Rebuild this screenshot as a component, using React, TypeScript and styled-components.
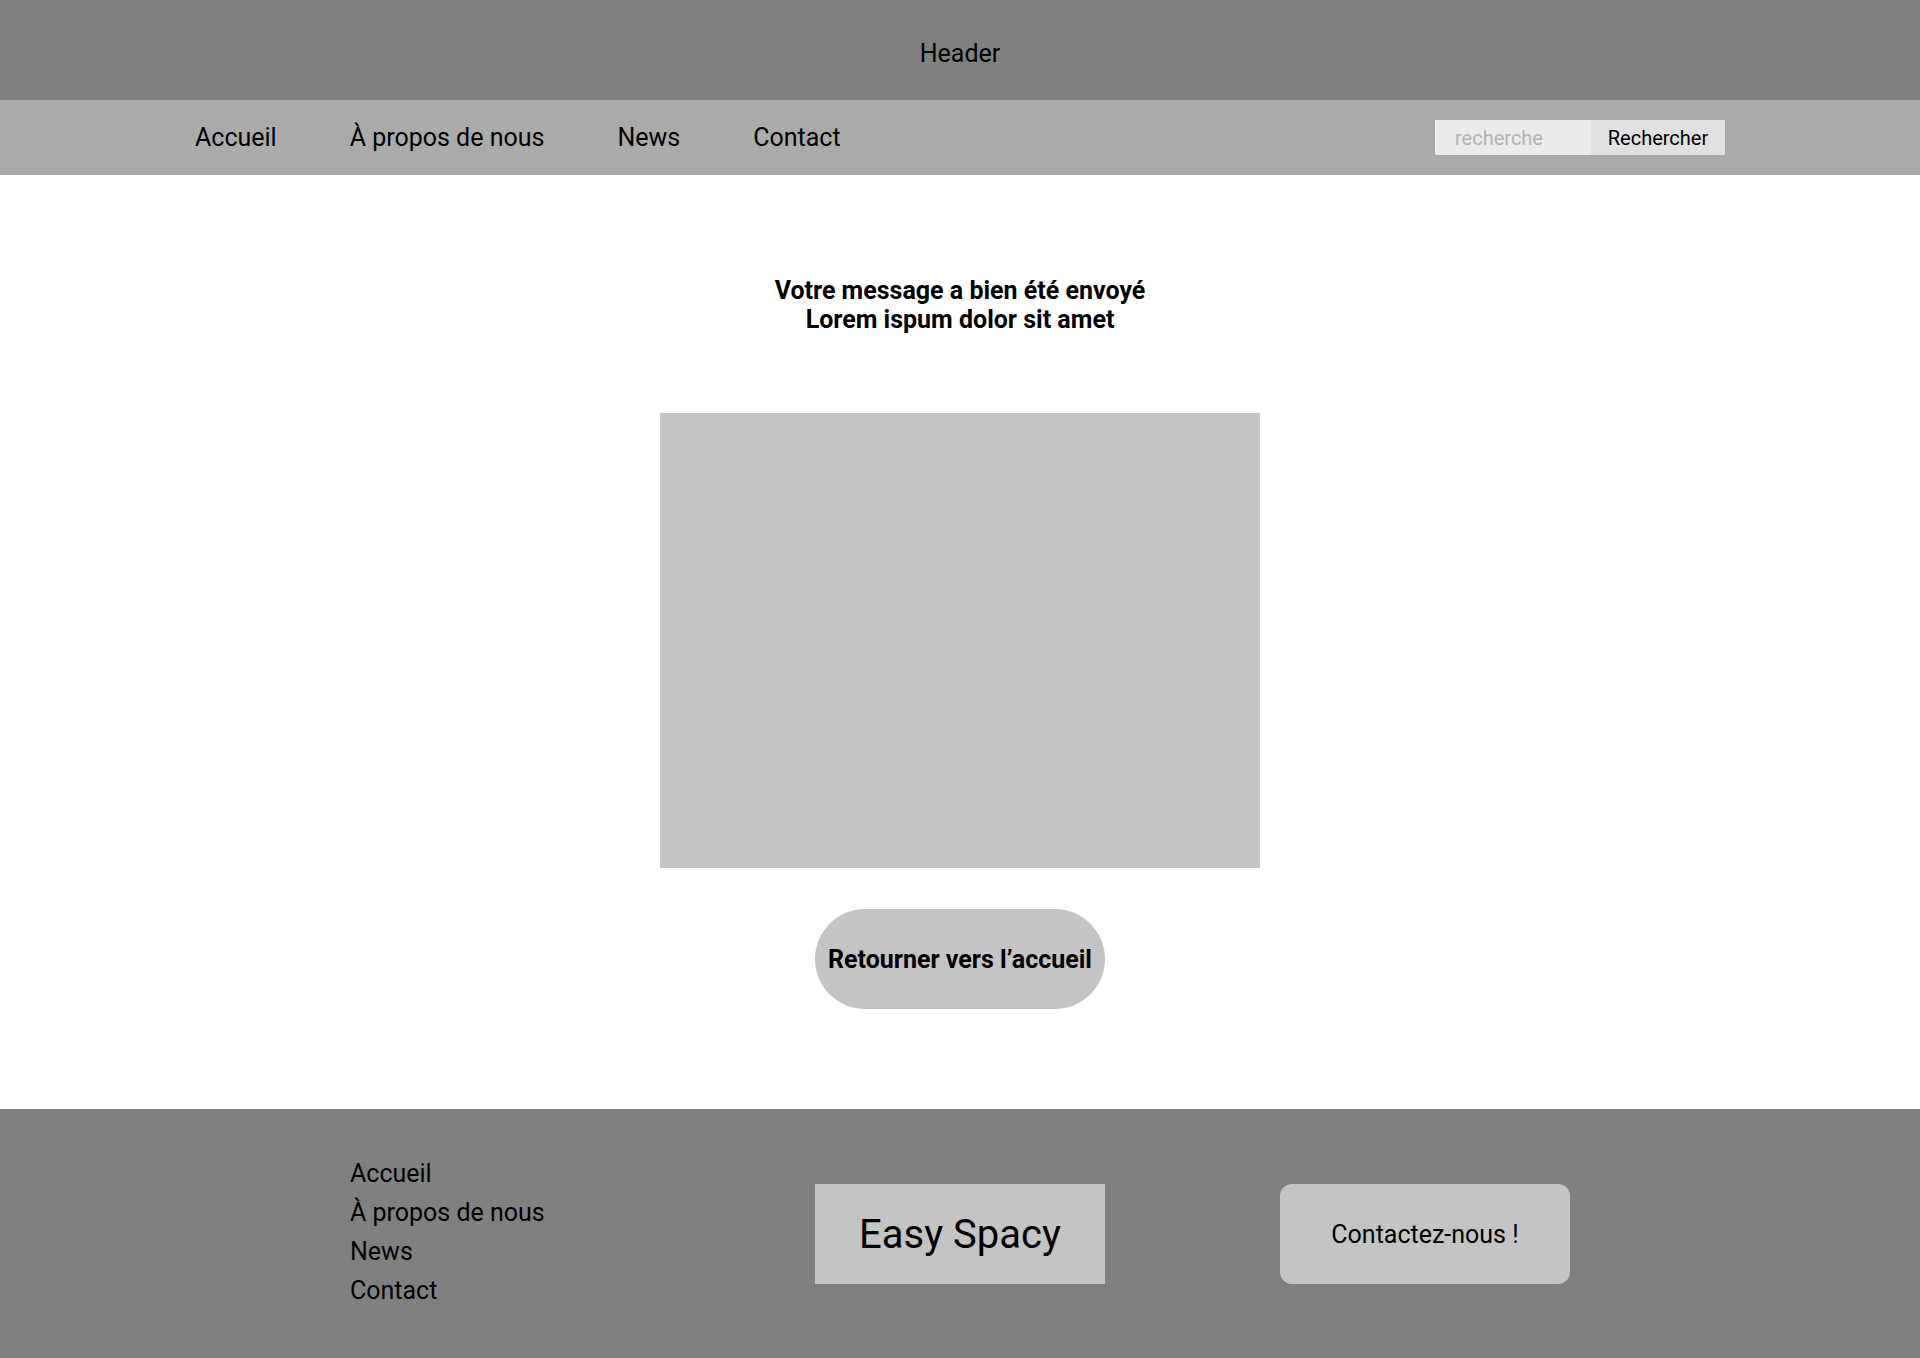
import styled, { createGlobalStyle } from 'styled-components';

const GlobalStyle = createGlobalStyle`
  * {
    box-sizing: border-box;
  }
  body {
    margin: 0;
    font-family: Roboto, 'Liberation Sans', sans-serif;
    color: #000;
    background: #fff;
  }
`;

const navLinks = ['Accueil', 'À propos de nous', 'News', 'Contact'];

const App = () => {
  return (
    <>
      <GlobalStyle />
      <Page>
        <TopHeader>Header</TopHeader>
        <NavBar>
          <NavList>
            {navLinks.map((link) => (
              <NavLink key={link} href="#">
                {link}
              </NavLink>
            ))}
          </NavList>
          <SearchForm onSubmit={(e) => e.preventDefault()}>
            <SearchInput placeholder="recherche" />
            <SearchButton type="submit">Rechercher</SearchButton>
          </SearchForm>
        </NavBar>
        <Main>
          <Title>
            Votre message a bien été envoyé
            <br />
            Lorem ispum dolor sit amet
          </Title>
          <ImagePlaceholder />
          <BackButton href="#">Retourner vers l’accueil</BackButton>
        </Main>
        <Footer>
          <FooterInner>
            <FooterLinks>
              {navLinks.map((link) => (
                <FooterLink key={link} href="#">
                  {link}
                </FooterLink>
              ))}
            </FooterLinks>
            <Logo>Easy Spacy</Logo>
            <ContactButton href="#">Contactez-nous !</ContactButton>
          </FooterInner>
        </Footer>
      </Page>
    </>
  );
};

const Page = styled.div`
  display: flex;
  flex-direction: column;
  min-height: 100vh;
`;

const TopHeader = styled.header`
  height: 100px;
  background-color: #808080;
  display: flex;
  align-items: center;
  justify-content: center;
  font-size: 25px;
  padding-top: 6px;
`;

const NavBar = styled.nav`
  height: 75px;
  background-color: #aaaaaa;
  display: flex;
  align-items: center;
  justify-content: space-between;
  padding: 0 195px;
`;

const NavList = styled.div`
  display: flex;
  gap: 73px;
`;

const NavLink = styled.a`
  color: #000;
  text-decoration: none;
  font-size: 25px;
`;

const SearchForm = styled.form`
  display: flex;
  height: 35px;
  margin: 0;
`;

const SearchInput = styled.input`
  width: 156px;
  border: none;
  outline: none;
  background-color: #ebebeb;
  padding: 0 20px;
  font-family: inherit;
  font-size: 20px;
  color: #000;

  &::placeholder {
    color: #b3b3b3;
  }
`;

const SearchButton = styled.button`
  width: 134px;
  border: none;
  background-color: #e0e0e0;
  font-family: inherit;
  font-size: 20px;
  color: #000;
  padding: 0;
  cursor: pointer;
`;

const Main = styled.main`
  flex: 1;
  display: flex;
  flex-direction: column;
  align-items: center;
  padding: 100px 0 100px;
`;

const Title = styled.h1`
  margin: 0;
  font-size: 25px;
  line-height: 29px;
  font-weight: 700;
  text-align: center;
  padding-top: 1px;
`;

const ImagePlaceholder = styled.div`
  width: 600px;
  height: 455px;
  margin-top: 79px;
  background-color: #c4c4c4;
`;

const BackButton = styled.a`
  margin-top: 41px;
  width: 290px;
  height: 100px;
  border-radius: 50px;
  background-color: #c4c4c4;
  display: flex;
  align-items: center;
  justify-content: center;
  color: #000;
  text-decoration: none;
  font-size: 25px;
  font-weight: 700;
`;

const Footer = styled.footer`
  height: 250px;
  background-color: #808080;
  display: flex;
  justify-content: center;
  align-items: center;
`;

const FooterInner = styled.div`
  width: 1220px;
  display: flex;
  justify-content: space-between;
  align-items: center;
`;

const FooterLinks = styled.div`
  width: 290px;
  display: flex;
  flex-direction: column;
  gap: 10px;
  margin-top: -5px;
`;

const FooterLink = styled.a`
  color: #000;
  text-decoration: none;
  font-size: 25px;
  line-height: 29px;
`;

const Logo = styled.div`
  width: 290px;
  height: 100px;
  background-color: #c4c4c4;
  display: flex;
  align-items: center;
  justify-content: center;
  font-size: 40px;
`;

const ContactButton = styled.a`
  width: 290px;
  height: 100px;
  border-radius: 12px;
  background-color: #c4c4c4;
  display: flex;
  align-items: center;
  justify-content: center;
  color: #000;
  text-decoration: none;
  font-size: 25px;
`;

export default App;
